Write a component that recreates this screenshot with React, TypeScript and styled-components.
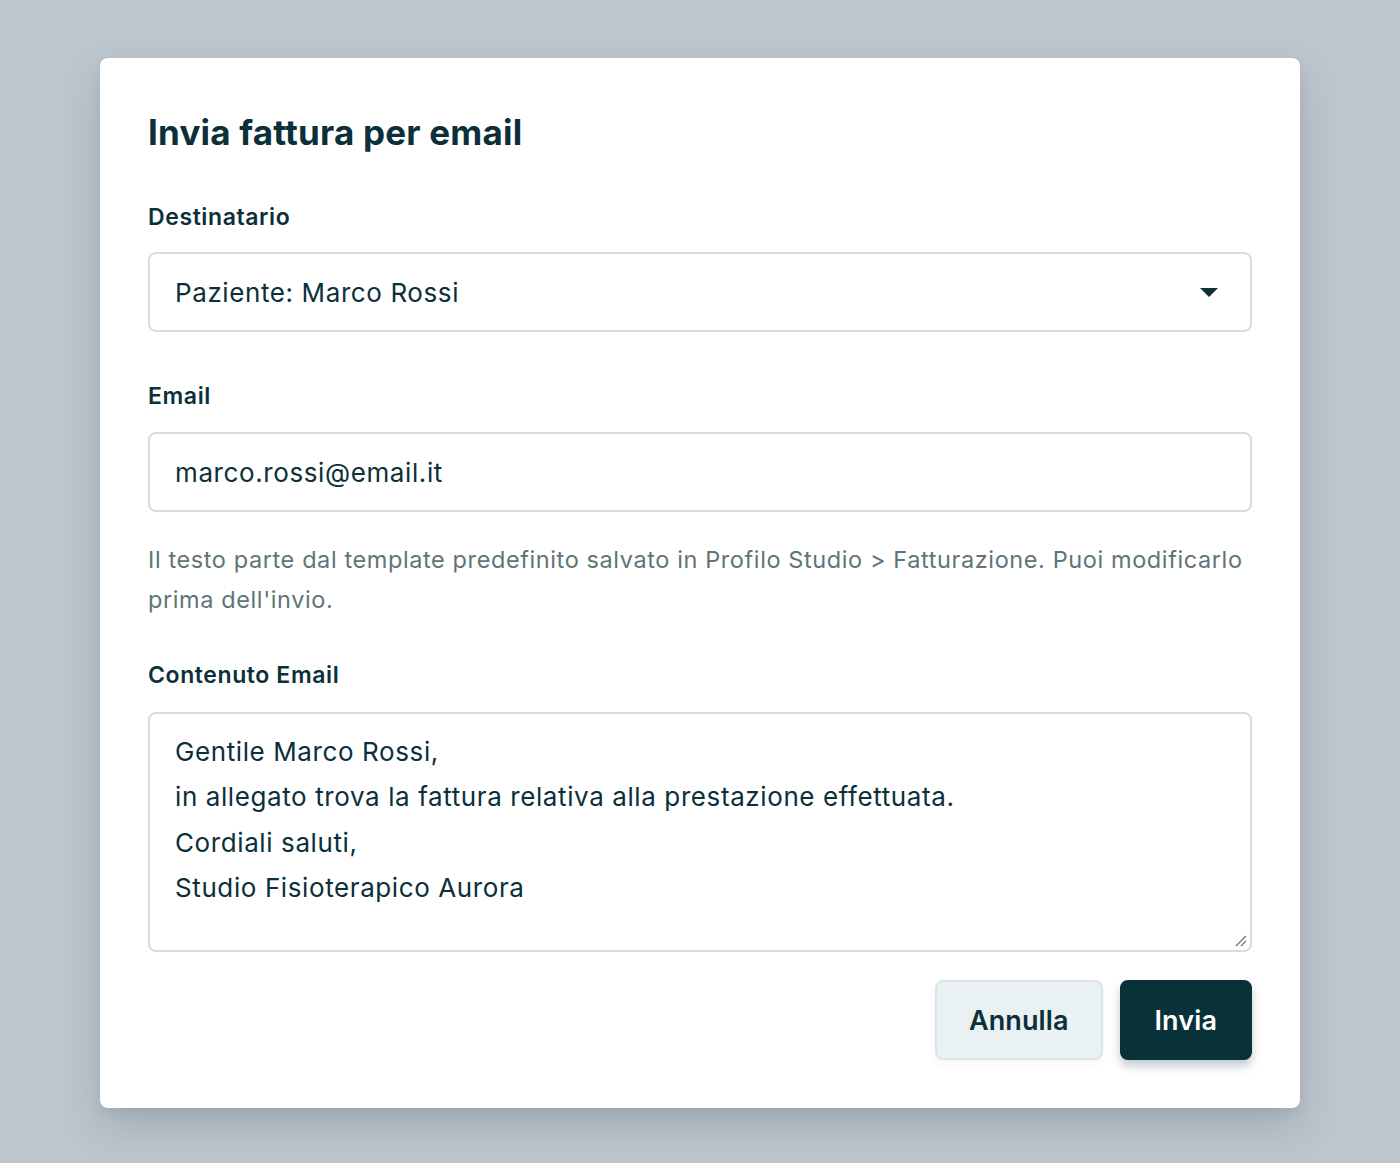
import React from "react";
import styled, { createGlobalStyle } from "styled-components";

const GlobalStyle = createGlobalStyle`
  html, body {
    margin: 0;
    padding: 0;
    background: #bec6cd;
    font-family: Inter, "Noto Sans", sans-serif;
    color: #0b3039;
  }
  * {
    box-sizing: border-box;
  }
`;

const Backdrop = styled.div`
  min-height: 1163px;
  display: flex;
  justify-content: center;
  align-items: flex-start;
  padding-top: 58px;
`;

const Modal = styled.div`
  width: 1200px;
  background: #ffffff;
  border-radius: 8px;
  padding: 48px;
  box-shadow: 0 20px 40px rgba(40, 55, 65, 0.18), 0 4px 10px rgba(40, 55, 65, 0.08);
  display: flex;
  flex-direction: column;
`;

const Title = styled.h2`
  margin: 0 0 44px;
  font-size: 35px;
  font-weight: 700;
  line-height: 52px;
  letter-spacing: 0.2px;
  color: #0b3039;
`;

const Field = styled.div<{ $gap?: number }>`
  display: flex;
  flex-direction: column;
  margin-bottom: ${(p) => p.$gap ?? 0}px;
`;

const Label = styled.label<{ $space?: number }>`
  font-size: 23px;
  font-weight: 600;
  line-height: 30px;
  letter-spacing: 0.6px;
  margin-bottom: ${(p) => p.$space ?? 20}px;
  color: #0b3039;
`;

const SelectBox = styled.div`
  height: 80px;
  border: 2px solid #d6dcdf;
  border-radius: 8px;
  padding: 0 24px 0 25px;
  display: flex;
  align-items: center;
  justify-content: space-between;
  font-size: 26px;
  letter-spacing: 0.6px;
  color: #0b3039;
`;

const Caret = styled.span`
  width: 0;
  height: 0;
  border-left: 9px solid transparent;
  border-right: 9px solid transparent;
  border-top: 9px solid #0b3039;
  margin-right: 8px;
`;

const Input = styled.div`
  height: 80px;
  border: 2px solid #d6dcdf;
  border-radius: 8px;
  padding: 0 25px;
  display: flex;
  align-items: center;
  font-size: 26px;
  letter-spacing: 0.6px;
  color: #0b3039;
`;

const Help = styled.p`
  margin: 28px 0 40px;
  font-size: 23.5px;
  line-height: 40px;
  letter-spacing: 0.6px;
  color: #607478;
`;

const TextArea = styled.div`
  position: relative;
  height: 240px;
  border: 2px solid #d6dcdf;
  border-radius: 8px;
  padding: 15px 25px;
  font-size: 26px;
  line-height: 45.4px;
  letter-spacing: 0.6px;
  color: #0b3039;
`;

const Grip = styled.svg`
  position: absolute;
  right: 3px;
  bottom: 3px;
`;

const Actions = styled.div`
  display: flex;
  justify-content: flex-end;
  gap: 17px;
  margin-top: 28px;
`;

const Button = styled.button<{ $primary?: boolean }>`
  height: 80px;
  padding: 0 ${(p) => (p.$primary ? 33 : 32)}px;
  border-radius: 8px;
  font-family: Inter, "Noto Sans", sans-serif;
  font-size: 27px;
  font-weight: 600;
  letter-spacing: 0.1px;
  cursor: pointer;
  border: 2px solid ${(p) => (p.$primary ? "#08313a" : "#dbe5e8")};
  background: ${(p) => (p.$primary ? "#08313a" : "#e9f1f3")};
  color: ${(p) => (p.$primary ? "#ffffff" : "#0b3039")};
  box-shadow: ${(p) =>
    p.$primary ? "0 6px 10px rgba(8, 49, 58, 0.25)" : "0 4px 10px rgba(0,0,0,0.04)"};
`;

const lines = [
  "Gentile Marco Rossi,",
  "in allegato trova la fattura relativa alla prestazione effettuata.",
  "Cordiali saluti,",
  "Studio Fisioterapico Aurora",
];

export default function App() {
  return (
    <>
      <GlobalStyle />
      <Backdrop>
        <Modal>
          <Title>Invia fattura per email</Title>
          <Field $gap={49}>
            <Label>Destinatario</Label>
            <SelectBox>
              <span>Paziente: Marco Rossi</span>
              <Caret />
            </SelectBox>
          </Field>
          <Field>
            <Label $space={21}>Email</Label>
            <Input>marco.rossi@email.it</Input>
          </Field>
          <Help>
            Il testo parte dal template predefinito salvato in Profilo Studio &gt; Fatturazione.
            Puoi modificarlo prima dell'invio.
          </Help>
          <Field>
            <Label $space={22}>Contenuto Email</Label>
            <TextArea>
              {lines.map((l, i) => (
                <div key={`line_${i}`}>{l}</div>
              ))}
              <Grip width="14" height="14" viewBox="0 0 14 14">
                <path d="M13 3 L3 13 M13 8 L8 13" stroke="#6b7679" strokeWidth="1.4" />
              </Grip>
            </TextArea>
          </Field>
          <Actions>
            <Button>Annulla</Button>
            <Button $primary>Invia</Button>
          </Actions>
        </Modal>
      </Backdrop>
    </>
  );
}
